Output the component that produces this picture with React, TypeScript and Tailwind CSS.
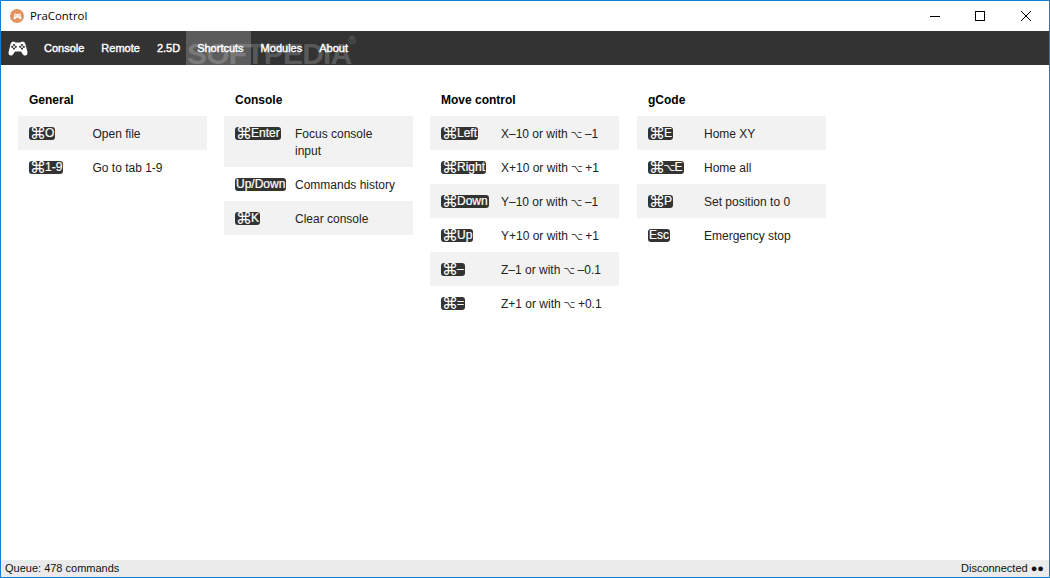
import React from 'react';

type Shortcut = { keys: string; text: string };

const GAMEPAD =
  'M6 1.5 C4 1.5 3 2.5 2.6 4 L0.6 12 C0.2 14 1.2 15.5 2.8 15.5 C4.2 15.5 5 14.6 5.8 13.4 L7 11.5 H13 L14.2 13.4 C15 14.6 15.8 15.5 17.2 15.5 C18.8 15.5 19.8 14 19.4 12 L17.4 4 C17 2.5 16 1.5 14 1.5 L12.6 2.6 H7.4 Z';

const Gamepad = ({ className, dots }: { className: string; dots: string }) => (
  <svg viewBox="0 0 20 17" className={className}>
    <path d={GAMEPAD} fill="#fff" />
    <g fill={dots}>
      <circle cx="6" cy="5" r="1.1" />
      <circle cx="4.2" cy="6.8" r="1.1" />
      <circle cx="7.8" cy="6.8" r="1.1" />
      <circle cx="6" cy="8.6" r="1.1" />
      <circle cx="14" cy="5" r="1.1" />
      <circle cx="12.2" cy="6.8" r="1.1" />
      <circle cx="15.8" cy="6.8" r="1.1" />
      <circle cx="14" cy="8.6" r="1.1" />
    </g>
  </svg>
);

// the mac symbols come out too small / too wide in the fallback font, so size them by hand
const Glyphs = ({ text }: { text: string }) => (
  <>
    {text.split(/([⌘⌥])/).map((part, i) =>
      part === '⌘' ? (
        <span key={i} className="inline-block w-[15px] text-center text-[16px] leading-[13px] align-top font-['DejaVu_Sans',sans-serif] [-webkit-text-stroke:0px]">
          {part}
        </span>
      ) : part === '⌥' ? (
        <span key={i} className="-mx-[0.5px] text-[10px] leading-none font-['DejaVu_Sans',sans-serif]">
          {part}
        </span>
      ) : (
        part
      )
    )}
  </>
);

const Key = ({ keys }: { keys: string }) => (
  <kbd className="mt-px inline-block h-[13px] rounded-[3px] bg-[#333333] px-px text-[12px] leading-[13px] font-normal text-white font-['Liberation_Sans',sans-serif] whitespace-nowrap align-top [-webkit-text-stroke:0.2px_white]">
    <Glyphs text={keys} />
  </kbd>
);

const Column = ({
  title,
  items,
  keyClass,
  className,
}: {
  title: string;
  items: Shortcut[];
  keyClass: string;
  className?: string;
}) => (
  <div className={className}>
    <h2 className="h-[34px] pl-[11px] pt-px text-[12px] leading-[34px] font-bold text-black">{title}</h2>
    {items.map((item, i) => (
      <div
        key={item.keys}
        className={`flex pt-[10px] pb-[7px] pl-[11px] pr-[12px] text-[12px] leading-[17px] text-[#222222] ${
          i % 2 === 0 ? 'bg-[#f2f2f2]' : 'bg-white'
        }`}
      >
        <div className={`shrink-0 ${keyClass}`}>
          <Key keys={item.keys} />
        </div>
        <div>
          <Glyphs text={item.text} />
        </div>
      </div>
    ))}
  </div>
);

const general: Shortcut[] = [
  { keys: '⌘O', text: 'Open file' },
  { keys: '⌘1-9', text: 'Go to tab 1-9' },
];

const consoleKeys: Shortcut[] = [
  { keys: '⌘Enter', text: 'Focus console input' },
  { keys: 'Up/Down', text: 'Commands history' },
  { keys: '⌘K', text: 'Clear console' },
];

const moveControl: Shortcut[] = [
  { keys: '⌘Left', text: 'X–10 or with ⌥ –1' },
  { keys: '⌘Right', text: 'X+10 or with ⌥ +1' },
  { keys: '⌘Down', text: 'Y–10 or with ⌥ –1' },
  { keys: '⌘Up', text: 'Y+10 or with ⌥ +1' },
  { keys: '⌘–', text: 'Z–1 or with ⌥ –0.1' },
  { keys: '⌘=', text: 'Z+1 or with ⌥ +0.1' },
];

const gCode: Shortcut[] = [
  { keys: '⌘E', text: 'Home XY' },
  { keys: '⌘⌥E', text: 'Home all' },
  { keys: '⌘P', text: 'Set position to 0' },
  { keys: 'Esc', text: 'Emergency stop' },
];

const tabs = ['Console', 'Remote', '2.5D', 'Shortcuts', 'Modules', 'About'];

export default function App() {
  return (
    <div className="flex h-screen flex-col overflow-hidden border border-[#0f7fd8] bg-white font-['Liberation_Sans',Arial,sans-serif]">
      {/* title bar */}
      <div className="flex h-[30px] shrink-0 items-center">
        <div className="ml-[9px] flex h-[14px] w-[14px] items-center justify-center rounded-full bg-[#e2935f]">
          <Gamepad className="h-[7px] w-[9px]" dots="#e2935f" />
        </div>
        <span className="ml-[6px] text-[11.4px] text-black font-['Open_Sans',sans-serif]">PraControl</span>
        <div className="ml-auto flex items-center">
          <svg viewBox="0 0 10 10" className="mr-[35px] h-[10px] w-[10px]" stroke="#000" fill="none">
            <path d="M0 5.5H10" />
          </svg>
          <svg viewBox="0 0 10 10" className="mr-[36px] h-[10px] w-[10px]" stroke="#000" fill="none">
            <rect x="0.5" y="0.5" width="9" height="9" />
          </svg>
          <svg viewBox="0 0 10 10" className="mr-[18px] h-[10px] w-[10px]" stroke="#000" fill="none">
            <path d="M0 0L10 10M10 0L0 10" />
          </svg>
        </div>
      </div>

      {/* nav */}
      <div className="relative flex h-[34px] shrink-0 items-center overflow-hidden bg-[#333333]">
        <Gamepad className="ml-[7px] h-[17px] w-[20px]" dots="#333333" />
        {/* watermark */}
        <div className="absolute left-[185px] top-0 h-[34px] w-[65px] bg-[#5c5c5c]" />
        <div className="absolute left-[186px] top-[12px] text-[30px] leading-[22px] tracking-[-0.8px] font-bold text-white/20">
          SOFTPEDIA
        </div>
        <div className="absolute left-[347px] top-[4px] text-[11px] leading-[11px] text-white/25">®</div>
        <div className="relative ml-[16px] flex gap-[17px] text-[11px] text-white [-webkit-text-stroke:0.4px_white]">
          {tabs.map((tab) => (
            <span key={tab}>{tab}</span>
          ))}
        </div>
      </div>

      {/* shortcuts */}
      <div className="flex-1 pl-[17px] pt-[17px]">
        <div className="grid grid-cols-[189px_189px_189px_189px] gap-x-[17px]">
          <Column title="General" items={general} keyClass="w-[63.5px]" />
          <Column title="Console" items={consoleKeys} keyClass="w-[60px]" />
          <Column title="Move control" items={moveControl} keyClass="w-[60px]" />
          <Column title="gCode" items={gCode} keyClass="w-[56px]" className="ml-px w-[189px]" />
        </div>
      </div>

      {/* status bar */}
      <div className="flex h-[17px] shrink-0 items-center justify-between bg-[#ebebeb] pl-[4px] pr-[5px] text-[11px] text-[#111111]">
        <span>Queue: 478 commands</span>
        <span>Disconnected ●●</span>
      </div>
    </div>
  );
}
